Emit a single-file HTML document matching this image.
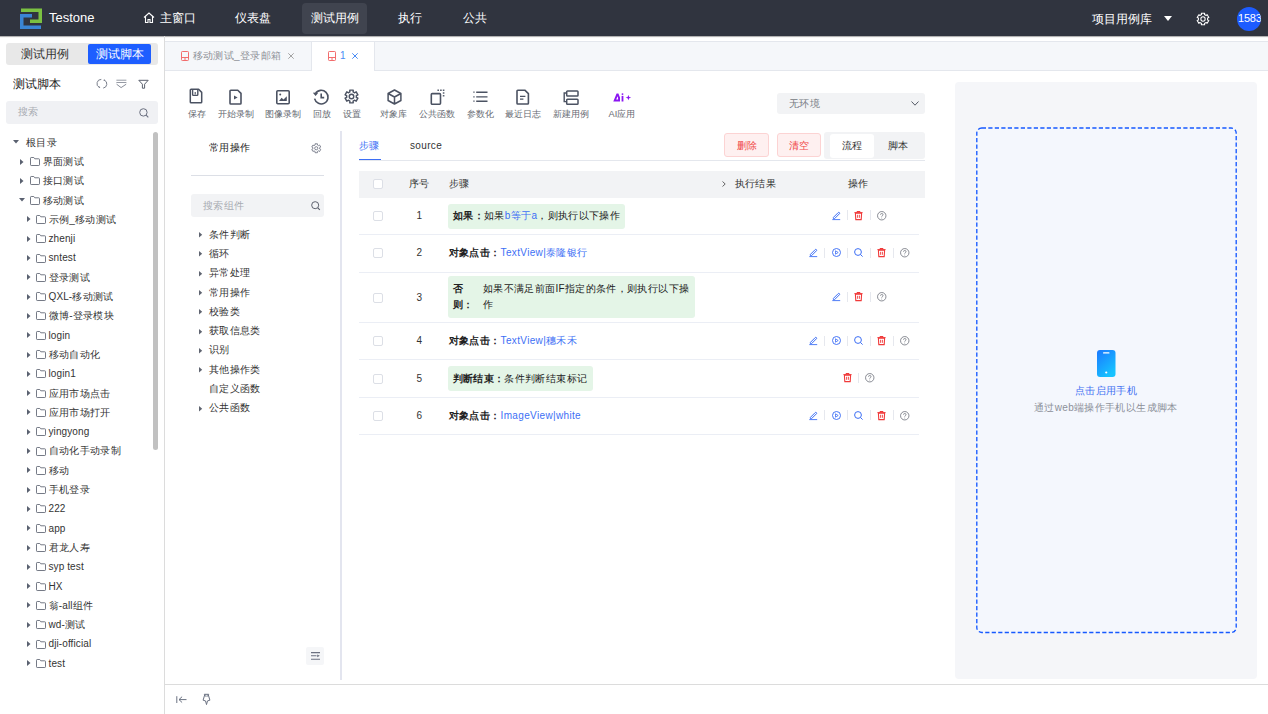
<!DOCTYPE html>
<html><head><meta charset="utf-8">
<style>
*{margin:0;padding:0;box-sizing:border-box}
html,body{width:1268px;height:714px;overflow:hidden;background:#fff;font-family:"Liberation Sans",sans-serif;position:relative}
.a{position:absolute}
.t{position:absolute;white-space:nowrap;line-height:20px;height:20px}
.tr{font-size:10px;letter-spacing:0.35px;color:#333}
.lat{font-size:10px;letter-spacing:0.1px}
.tl{font-size:9.2px;color:#666a72}
.cb{left:373px;width:10px;height:10px;border:1px solid #dcdfe6;border-radius:2px;background:#fff}
svg{position:absolute;overflow:visible}
</style></head><body>

<!-- HEADER -->
<div class="a" style="left:0;top:0;width:1268px;height:36px;background:#30343f;box-shadow:0 1px 0.8px rgba(0,0,0,0.3)"></div>
<svg style="left:20px;top:8px" width="22" height="21" viewBox="0 0 22 21">
  <path d="M1 0.5H22V15H10V11.5H18.5V4H1Z" fill="#7bc142"/>
  <path d="M0 6H12V9.5H3.5V17.5H21V21H0Z" fill="#3a85d5"/>
</svg>
<div class="t" style="left:49px;top:8px;font-size:13px;color:#fff">Testone</div>

<svg style="left:143px;top:12px" width="12" height="11" viewBox="0 0 12 11"><path d="M1 5.5L6 1L11 5.5M2.5 4.5V10.5H5V7.5H7V10.5H9.5V4.5" fill="none" stroke="#fff" stroke-width="1.1"/></svg>
<div class="t" style="left:159.5px;top:8px;font-size:12.2px;color:#fff">主窗口</div>
<div class="t" style="left:235px;top:8px;font-size:12.2px;color:#fff">仪表盘</div>
<div class="a" style="left:302px;top:3px;width:65px;height:31px;background:#40444f;border-radius:4px"></div>
<div class="t" style="left:310.7px;top:8px;font-size:12.2px;color:#fff">测试用例</div>
<div class="t" style="left:398.4px;top:8px;font-size:12.2px;color:#fff">执行</div>
<div class="t" style="left:462.5px;top:8px;font-size:12.2px;color:#fff">公共</div>

<div class="t" style="left:1092px;top:9px;font-size:12.2px;color:#fff">项目用例库</div>
<svg style="left:1164px;top:16px" width="8" height="5" viewBox="0 0 8 5"><path d="M0 0H8L4 5Z" fill="#fff"/></svg>
<svg style="left:1196px;top:11.5px" width="14" height="14" viewBox="0 0 24 24"><path d="M9.16 2.10 L14.84 2.10 L14.47 4.39 L17.35 6.05 L19.15 4.59 L21.99 9.51 L19.83 10.34 L19.83 13.66 L21.99 14.49 L19.15 19.41 L17.35 17.95 L14.47 19.61 L14.84 21.90 L9.16 21.90 L9.53 19.61 L6.65 17.95 L4.85 19.41 L2.01 14.49 L4.17 13.66 L4.17 10.34 L2.01 9.51 L4.85 4.59 L6.65 6.05 L9.53 4.39Z" fill="none" stroke="#fff" stroke-width="1.8" stroke-linejoin="round"/><circle cx="12" cy="12" r="3.7" fill="none" stroke="#fff" stroke-width="1.8"/></svg>
<div class="a" style="left:1237px;top:6.5px;width:24px;height:24px;border-radius:50%;background:#1d5cff;overflow:hidden">
  <div class="t" style="left:1px;top:1px;font-size:11px;color:#fff;letter-spacing:-0.2px">1583</div>
</div>

<!-- SIDEBAR -->
<div class="a" style="left:164px;top:36px;width:1px;height:678px;background:#dcdcdc"></div>
<div class="a" style="left:6px;top:43px;width:152px;height:22px;background:#e8e8e8;border-radius:3px"></div>
<div class="a" style="left:88px;top:44px;width:63px;height:20px;background:#1e5eff;border-radius:2px"></div>
<div class="t" style="left:21px;top:44px;font-size:12.2px;color:#333">测试用例</div>
<div class="t" style="left:96px;top:44px;font-size:12.2px;color:#fff">测试脚本</div>
<div class="t" style="left:13px;top:74px;font-size:12.4px;color:#222">测试脚本</div>

<!-- sidebar icons -->
<svg style="left:97px;top:78px" width="11" height="11" viewBox="0 0 11 11"><path d="M4.3 1.4A4.2 4.2 0 0 0 2.2 9.3" fill="none" stroke="#7a7f8c" stroke-width="1"/><path d="M7.3 2.1A4.2 4.2 0 0 1 6.2 10.1" fill="none" stroke="#7a7f8c" stroke-width="1"/><circle cx="2.4" cy="9.3" r="0.8" fill="#7a7f8c"/><circle cx="7.3" cy="2.2" r="0.8" fill="#7a7f8c"/></svg>
<svg style="left:115.5px;top:78px" width="11" height="11" viewBox="0 0 11 11"><path d="M0.4 2.2H10.4M0.4 4.5H10.4" stroke="#8a8f9a" stroke-width="0.9"/><path d="M0.6 6.2L5.1 9.6L10.2 6.2" fill="none" stroke="#7a7f8c" stroke-width="0.9"/></svg>
<svg style="left:138px;top:78px" width="11" height="11" viewBox="0 0 11 11"><path d="M0.8 2.3H10.2L6.6 6.2V10.2H4.4V6.2Z" fill="none" stroke="#5a606d" stroke-width="1" stroke-linejoin="round"/></svg>
<!-- search -->
<div class="a" style="left:6px;top:100.5px;width:152px;height:23.5px;background:#f0f1f4;border-radius:3px"></div>
<div class="t" style="left:18px;top:102px;font-size:10px;letter-spacing:0.35px;color:#a8abb2">搜索</div>
<svg style="left:139px;top:107.5px" width="10" height="10" viewBox="0 0 10 10"><circle cx="4.4" cy="4.4" r="3.7" fill="none" stroke="#6b7080" stroke-width="1"/><path d="M7.2 7.2L9.3 9.3" stroke="#6b7080" stroke-width="1.1"/></svg>
<!-- scrollbar -->
<div class="a" style="left:153px;top:132px;width:5px;height:318px;background:#c1c1c1;border-radius:3px"></div>
<svg style="left:13px;top:140.2px" width="6" height="4" viewBox="0 0 6 4"><path d="M0 0H6L3 3.5Z" fill="#5a6170"/></svg>
<div class="t tr" style="left:26px;top:132.6px">根目录</div>
<svg style="left:20px;top:158.5px" width="4" height="6" viewBox="0 0 4 6"><path d="M0 0V6L3.5 3Z" fill="#5a6170"/></svg>
<svg style="left:30px;top:157.0px" width="10" height="9" viewBox="0 0 10 9"><path d="M0.5 1.2Q0.5 0.5 1.2 0.5H3.8L4.8 1.8H8.8Q9.5 1.8 9.5 2.5V7.8Q9.5 8.5 8.8 8.5H1.2Q0.5 8.5 0.5 7.8Z" fill="none" stroke="#656b78" stroke-width="0.9"/></svg>
<div class="t tr" style="left:42.5px;top:151.9px">界面测试</div>
<svg style="left:20px;top:177.8px" width="4" height="6" viewBox="0 0 4 6"><path d="M0 0V6L3.5 3Z" fill="#5a6170"/></svg>
<svg style="left:30px;top:176.3px" width="10" height="9" viewBox="0 0 10 9"><path d="M0.5 1.2Q0.5 0.5 1.2 0.5H3.8L4.8 1.8H8.8Q9.5 1.8 9.5 2.5V7.8Q9.5 8.5 8.8 8.5H1.2Q0.5 8.5 0.5 7.8Z" fill="none" stroke="#656b78" stroke-width="0.9"/></svg>
<div class="t tr" style="left:42.5px;top:171.2px">接口测试</div>
<svg style="left:18.5px;top:198.1px" width="6" height="4" viewBox="0 0 6 4"><path d="M0 0H6L3 3.5Z" fill="#5a6170"/></svg>
<svg style="left:30px;top:195.6px" width="10" height="9" viewBox="0 0 10 9"><path d="M0.5 1.2Q0.5 0.5 1.2 0.5H3.8L4.8 1.8H8.8Q9.5 1.8 9.5 2.5V7.8Q9.5 8.5 8.8 8.5H1.2Q0.5 8.5 0.5 7.8Z" fill="none" stroke="#656b78" stroke-width="0.9"/></svg>
<div class="t tr" style="left:42.5px;top:190.5px">移动测试</div>
<svg style="left:26.5px;top:216.4px" width="4" height="6" viewBox="0 0 4 6"><path d="M0 0V6L3.5 3Z" fill="#5a6170"/></svg>
<svg style="left:36px;top:214.9px" width="10" height="9" viewBox="0 0 10 9"><path d="M0.5 1.2Q0.5 0.5 1.2 0.5H3.8L4.8 1.8H8.8Q9.5 1.8 9.5 2.5V7.8Q9.5 8.5 8.8 8.5H1.2Q0.5 8.5 0.5 7.8Z" fill="none" stroke="#656b78" stroke-width="0.9"/></svg>
<div class="t tr" style="left:48.5px;top:209.8px">示例<span class="lat">_</span>移动测试</div>
<svg style="left:26.5px;top:235.7px" width="4" height="6" viewBox="0 0 4 6"><path d="M0 0V6L3.5 3Z" fill="#5a6170"/></svg>
<svg style="left:36px;top:234.2px" width="10" height="9" viewBox="0 0 10 9"><path d="M0.5 1.2Q0.5 0.5 1.2 0.5H3.8L4.8 1.8H8.8Q9.5 1.8 9.5 2.5V7.8Q9.5 8.5 8.8 8.5H1.2Q0.5 8.5 0.5 7.8Z" fill="none" stroke="#656b78" stroke-width="0.9"/></svg>
<div class="t tr" style="left:48.5px;top:229.1px"><span class="lat">zhenji</span></div>
<svg style="left:26.5px;top:255.0px" width="4" height="6" viewBox="0 0 4 6"><path d="M0 0V6L3.5 3Z" fill="#5a6170"/></svg>
<svg style="left:36px;top:253.5px" width="10" height="9" viewBox="0 0 10 9"><path d="M0.5 1.2Q0.5 0.5 1.2 0.5H3.8L4.8 1.8H8.8Q9.5 1.8 9.5 2.5V7.8Q9.5 8.5 8.8 8.5H1.2Q0.5 8.5 0.5 7.8Z" fill="none" stroke="#656b78" stroke-width="0.9"/></svg>
<div class="t tr" style="left:48.5px;top:248.4px"><span class="lat">sntest</span></div>
<svg style="left:26.5px;top:274.3px" width="4" height="6" viewBox="0 0 4 6"><path d="M0 0V6L3.5 3Z" fill="#5a6170"/></svg>
<svg style="left:36px;top:272.8px" width="10" height="9" viewBox="0 0 10 9"><path d="M0.5 1.2Q0.5 0.5 1.2 0.5H3.8L4.8 1.8H8.8Q9.5 1.8 9.5 2.5V7.8Q9.5 8.5 8.8 8.5H1.2Q0.5 8.5 0.5 7.8Z" fill="none" stroke="#656b78" stroke-width="0.9"/></svg>
<div class="t tr" style="left:48.5px;top:267.7px">登录测试</div>
<svg style="left:26.5px;top:293.6px" width="4" height="6" viewBox="0 0 4 6"><path d="M0 0V6L3.5 3Z" fill="#5a6170"/></svg>
<svg style="left:36px;top:292.1px" width="10" height="9" viewBox="0 0 10 9"><path d="M0.5 1.2Q0.5 0.5 1.2 0.5H3.8L4.8 1.8H8.8Q9.5 1.8 9.5 2.5V7.8Q9.5 8.5 8.8 8.5H1.2Q0.5 8.5 0.5 7.8Z" fill="none" stroke="#656b78" stroke-width="0.9"/></svg>
<div class="t tr" style="left:48.5px;top:287.0px"><span class="lat">QXL-</span>移动测试</div>
<svg style="left:26.5px;top:312.9px" width="4" height="6" viewBox="0 0 4 6"><path d="M0 0V6L3.5 3Z" fill="#5a6170"/></svg>
<svg style="left:36px;top:311.4px" width="10" height="9" viewBox="0 0 10 9"><path d="M0.5 1.2Q0.5 0.5 1.2 0.5H3.8L4.8 1.8H8.8Q9.5 1.8 9.5 2.5V7.8Q9.5 8.5 8.8 8.5H1.2Q0.5 8.5 0.5 7.8Z" fill="none" stroke="#656b78" stroke-width="0.9"/></svg>
<div class="t tr" style="left:48.5px;top:306.3px">微博<span class="lat">-</span>登录模块</div>
<svg style="left:26.5px;top:332.2px" width="4" height="6" viewBox="0 0 4 6"><path d="M0 0V6L3.5 3Z" fill="#5a6170"/></svg>
<svg style="left:36px;top:330.7px" width="10" height="9" viewBox="0 0 10 9"><path d="M0.5 1.2Q0.5 0.5 1.2 0.5H3.8L4.8 1.8H8.8Q9.5 1.8 9.5 2.5V7.8Q9.5 8.5 8.8 8.5H1.2Q0.5 8.5 0.5 7.8Z" fill="none" stroke="#656b78" stroke-width="0.9"/></svg>
<div class="t tr" style="left:48.5px;top:325.6px"><span class="lat">login</span></div>
<svg style="left:26.5px;top:351.5px" width="4" height="6" viewBox="0 0 4 6"><path d="M0 0V6L3.5 3Z" fill="#5a6170"/></svg>
<svg style="left:36px;top:350.0px" width="10" height="9" viewBox="0 0 10 9"><path d="M0.5 1.2Q0.5 0.5 1.2 0.5H3.8L4.8 1.8H8.8Q9.5 1.8 9.5 2.5V7.8Q9.5 8.5 8.8 8.5H1.2Q0.5 8.5 0.5 7.8Z" fill="none" stroke="#656b78" stroke-width="0.9"/></svg>
<div class="t tr" style="left:48.5px;top:344.9px">移动自动化</div>
<svg style="left:26.5px;top:370.8px" width="4" height="6" viewBox="0 0 4 6"><path d="M0 0V6L3.5 3Z" fill="#5a6170"/></svg>
<svg style="left:36px;top:369.3px" width="10" height="9" viewBox="0 0 10 9"><path d="M0.5 1.2Q0.5 0.5 1.2 0.5H3.8L4.8 1.8H8.8Q9.5 1.8 9.5 2.5V7.8Q9.5 8.5 8.8 8.5H1.2Q0.5 8.5 0.5 7.8Z" fill="none" stroke="#656b78" stroke-width="0.9"/></svg>
<div class="t tr" style="left:48.5px;top:364.2px"><span class="lat">login1</span></div>
<svg style="left:26.5px;top:390.1px" width="4" height="6" viewBox="0 0 4 6"><path d="M0 0V6L3.5 3Z" fill="#5a6170"/></svg>
<svg style="left:36px;top:388.6px" width="10" height="9" viewBox="0 0 10 9"><path d="M0.5 1.2Q0.5 0.5 1.2 0.5H3.8L4.8 1.8H8.8Q9.5 1.8 9.5 2.5V7.8Q9.5 8.5 8.8 8.5H1.2Q0.5 8.5 0.5 7.8Z" fill="none" stroke="#656b78" stroke-width="0.9"/></svg>
<div class="t tr" style="left:48.5px;top:383.5px">应用市场点击</div>
<svg style="left:26.5px;top:409.4px" width="4" height="6" viewBox="0 0 4 6"><path d="M0 0V6L3.5 3Z" fill="#5a6170"/></svg>
<svg style="left:36px;top:407.9px" width="10" height="9" viewBox="0 0 10 9"><path d="M0.5 1.2Q0.5 0.5 1.2 0.5H3.8L4.8 1.8H8.8Q9.5 1.8 9.5 2.5V7.8Q9.5 8.5 8.8 8.5H1.2Q0.5 8.5 0.5 7.8Z" fill="none" stroke="#656b78" stroke-width="0.9"/></svg>
<div class="t tr" style="left:48.5px;top:402.8px">应用市场打开</div>
<svg style="left:26.5px;top:428.7px" width="4" height="6" viewBox="0 0 4 6"><path d="M0 0V6L3.5 3Z" fill="#5a6170"/></svg>
<svg style="left:36px;top:427.2px" width="10" height="9" viewBox="0 0 10 9"><path d="M0.5 1.2Q0.5 0.5 1.2 0.5H3.8L4.8 1.8H8.8Q9.5 1.8 9.5 2.5V7.8Q9.5 8.5 8.8 8.5H1.2Q0.5 8.5 0.5 7.8Z" fill="none" stroke="#656b78" stroke-width="0.9"/></svg>
<div class="t tr" style="left:48.5px;top:422.1px"><span class="lat">yingyong</span></div>
<svg style="left:26.5px;top:448.0px" width="4" height="6" viewBox="0 0 4 6"><path d="M0 0V6L3.5 3Z" fill="#5a6170"/></svg>
<svg style="left:36px;top:446.5px" width="10" height="9" viewBox="0 0 10 9"><path d="M0.5 1.2Q0.5 0.5 1.2 0.5H3.8L4.8 1.8H8.8Q9.5 1.8 9.5 2.5V7.8Q9.5 8.5 8.8 8.5H1.2Q0.5 8.5 0.5 7.8Z" fill="none" stroke="#656b78" stroke-width="0.9"/></svg>
<div class="t tr" style="left:48.5px;top:441.4px">自动化手动录制</div>
<svg style="left:26.5px;top:467.3px" width="4" height="6" viewBox="0 0 4 6"><path d="M0 0V6L3.5 3Z" fill="#5a6170"/></svg>
<svg style="left:36px;top:465.8px" width="10" height="9" viewBox="0 0 10 9"><path d="M0.5 1.2Q0.5 0.5 1.2 0.5H3.8L4.8 1.8H8.8Q9.5 1.8 9.5 2.5V7.8Q9.5 8.5 8.8 8.5H1.2Q0.5 8.5 0.5 7.8Z" fill="none" stroke="#656b78" stroke-width="0.9"/></svg>
<div class="t tr" style="left:48.5px;top:460.7px">移动</div>
<svg style="left:26.5px;top:486.6px" width="4" height="6" viewBox="0 0 4 6"><path d="M0 0V6L3.5 3Z" fill="#5a6170"/></svg>
<svg style="left:36px;top:485.1px" width="10" height="9" viewBox="0 0 10 9"><path d="M0.5 1.2Q0.5 0.5 1.2 0.5H3.8L4.8 1.8H8.8Q9.5 1.8 9.5 2.5V7.8Q9.5 8.5 8.8 8.5H1.2Q0.5 8.5 0.5 7.8Z" fill="none" stroke="#656b78" stroke-width="0.9"/></svg>
<div class="t tr" style="left:48.5px;top:480.0px">手机登录</div>
<svg style="left:26.5px;top:505.9px" width="4" height="6" viewBox="0 0 4 6"><path d="M0 0V6L3.5 3Z" fill="#5a6170"/></svg>
<svg style="left:36px;top:504.4px" width="10" height="9" viewBox="0 0 10 9"><path d="M0.5 1.2Q0.5 0.5 1.2 0.5H3.8L4.8 1.8H8.8Q9.5 1.8 9.5 2.5V7.8Q9.5 8.5 8.8 8.5H1.2Q0.5 8.5 0.5 7.8Z" fill="none" stroke="#656b78" stroke-width="0.9"/></svg>
<div class="t tr" style="left:48.5px;top:499.3px"><span class="lat">222</span></div>
<svg style="left:26.5px;top:525.2px" width="4" height="6" viewBox="0 0 4 6"><path d="M0 0V6L3.5 3Z" fill="#5a6170"/></svg>
<svg style="left:36px;top:523.7px" width="10" height="9" viewBox="0 0 10 9"><path d="M0.5 1.2Q0.5 0.5 1.2 0.5H3.8L4.8 1.8H8.8Q9.5 1.8 9.5 2.5V7.8Q9.5 8.5 8.8 8.5H1.2Q0.5 8.5 0.5 7.8Z" fill="none" stroke="#656b78" stroke-width="0.9"/></svg>
<div class="t tr" style="left:48.5px;top:518.6px"><span class="lat">app</span></div>
<svg style="left:26.5px;top:544.5px" width="4" height="6" viewBox="0 0 4 6"><path d="M0 0V6L3.5 3Z" fill="#5a6170"/></svg>
<svg style="left:36px;top:543.0px" width="10" height="9" viewBox="0 0 10 9"><path d="M0.5 1.2Q0.5 0.5 1.2 0.5H3.8L4.8 1.8H8.8Q9.5 1.8 9.5 2.5V7.8Q9.5 8.5 8.8 8.5H1.2Q0.5 8.5 0.5 7.8Z" fill="none" stroke="#656b78" stroke-width="0.9"/></svg>
<div class="t tr" style="left:48.5px;top:537.9px">君龙人寿</div>
<svg style="left:26.5px;top:563.8px" width="4" height="6" viewBox="0 0 4 6"><path d="M0 0V6L3.5 3Z" fill="#5a6170"/></svg>
<svg style="left:36px;top:562.3px" width="10" height="9" viewBox="0 0 10 9"><path d="M0.5 1.2Q0.5 0.5 1.2 0.5H3.8L4.8 1.8H8.8Q9.5 1.8 9.5 2.5V7.8Q9.5 8.5 8.8 8.5H1.2Q0.5 8.5 0.5 7.8Z" fill="none" stroke="#656b78" stroke-width="0.9"/></svg>
<div class="t tr" style="left:48.5px;top:557.2px"><span class="lat">syp test</span></div>
<svg style="left:26.5px;top:583.1px" width="4" height="6" viewBox="0 0 4 6"><path d="M0 0V6L3.5 3Z" fill="#5a6170"/></svg>
<svg style="left:36px;top:581.6px" width="10" height="9" viewBox="0 0 10 9"><path d="M0.5 1.2Q0.5 0.5 1.2 0.5H3.8L4.8 1.8H8.8Q9.5 1.8 9.5 2.5V7.8Q9.5 8.5 8.8 8.5H1.2Q0.5 8.5 0.5 7.8Z" fill="none" stroke="#656b78" stroke-width="0.9"/></svg>
<div class="t tr" style="left:48.5px;top:576.5px"><span class="lat">HX</span></div>
<svg style="left:26.5px;top:602.4px" width="4" height="6" viewBox="0 0 4 6"><path d="M0 0V6L3.5 3Z" fill="#5a6170"/></svg>
<svg style="left:36px;top:600.9px" width="10" height="9" viewBox="0 0 10 9"><path d="M0.5 1.2Q0.5 0.5 1.2 0.5H3.8L4.8 1.8H8.8Q9.5 1.8 9.5 2.5V7.8Q9.5 8.5 8.8 8.5H1.2Q0.5 8.5 0.5 7.8Z" fill="none" stroke="#656b78" stroke-width="0.9"/></svg>
<div class="t tr" style="left:48.5px;top:595.8px">翁<span class="lat">-all</span>组件</div>
<svg style="left:26.5px;top:621.7px" width="4" height="6" viewBox="0 0 4 6"><path d="M0 0V6L3.5 3Z" fill="#5a6170"/></svg>
<svg style="left:36px;top:620.2px" width="10" height="9" viewBox="0 0 10 9"><path d="M0.5 1.2Q0.5 0.5 1.2 0.5H3.8L4.8 1.8H8.8Q9.5 1.8 9.5 2.5V7.8Q9.5 8.5 8.8 8.5H1.2Q0.5 8.5 0.5 7.8Z" fill="none" stroke="#656b78" stroke-width="0.9"/></svg>
<div class="t tr" style="left:48.5px;top:615.1px"><span class="lat">wd-</span>测试</div>
<svg style="left:26.5px;top:641.0px" width="4" height="6" viewBox="0 0 4 6"><path d="M0 0V6L3.5 3Z" fill="#5a6170"/></svg>
<svg style="left:36px;top:639.5px" width="10" height="9" viewBox="0 0 10 9"><path d="M0.5 1.2Q0.5 0.5 1.2 0.5H3.8L4.8 1.8H8.8Q9.5 1.8 9.5 2.5V7.8Q9.5 8.5 8.8 8.5H1.2Q0.5 8.5 0.5 7.8Z" fill="none" stroke="#656b78" stroke-width="0.9"/></svg>
<div class="t tr" style="left:48.5px;top:634.4px"><span class="lat">dji-official</span></div>
<svg style="left:26.5px;top:660.3px" width="4" height="6" viewBox="0 0 4 6"><path d="M0 0V6L3.5 3Z" fill="#5a6170"/></svg>
<svg style="left:36px;top:658.8px" width="10" height="9" viewBox="0 0 10 9"><path d="M0.5 1.2Q0.5 0.5 1.2 0.5H3.8L4.8 1.8H8.8Q9.5 1.8 9.5 2.5V7.8Q9.5 8.5 8.8 8.5H1.2Q0.5 8.5 0.5 7.8Z" fill="none" stroke="#656b78" stroke-width="0.9"/></svg>
<div class="t tr" style="left:48.5px;top:653.7px"><span class="lat">test</span></div><!-- TABS -->
<div class="a" style="left:165px;top:41px;width:1103px;height:30px;background:#f5f7fa;border-top:1px solid #e4e7ed;border-bottom:1px solid #e4e7ed"></div>
<div class="a" style="left:311px;top:41px;width:64px;height:30px;background:#fff;border-left:1px solid #e4e7ed;border-right:1px solid #e4e7ed;border-top:1px solid #e4e7ed"></div>
<svg style="left:181px;top:51px" width="8" height="10" viewBox="0 0 8 10"><rect x="0.5" y="0.5" width="7" height="9" rx="0.8" fill="none" stroke="#f26d6d" stroke-width="1"/><path d="M0.5 6.5H7.5M4 6.5V9.5" stroke="#f26d6d" stroke-width="1"/></svg>
<div class="t" style="left:192.5px;top:46px;font-size:10px;letter-spacing:0.35px;color:#8d9097">移动测试_登录邮箱</div>
<svg style="left:288px;top:53px" width="6" height="6" viewBox="0 0 6 6"><path d="M0.3 0.3L5.7 5.7M5.7 0.3L0.3 5.7" stroke="#999" stroke-width="0.9"/></svg>
<svg style="left:327.5px;top:51px" width="8" height="10" viewBox="0 0 8 10"><rect x="0.5" y="0.5" width="7" height="9" rx="0.8" fill="none" stroke="#f26d6d" stroke-width="1"/><path d="M0.5 6.5H7.5M4 6.5V9.5" stroke="#f26d6d" stroke-width="1"/></svg>
<div class="t" style="left:340px;top:46px;font-size:10px;letter-spacing:0.35px;color:#4a8cf5">1</div>
<svg style="left:352px;top:53px" width="6" height="6" viewBox="0 0 6 6"><path d="M0.3 0.3L5.7 5.7M5.7 0.3L0.3 5.7" stroke="#4a8cf5" stroke-width="1"/></svg>
<!-- TOOLBAR -->
<svg style="left:188.8px;top:88.3px" width="14" height="16" viewBox="0 0 14 16"><path d="M2.1 1.3H9.6L12.7 4.4V13.9Q12.7 14.7 11.9 14.7H2.1Q1.3 14.7 1.3 13.9V2.1Q1.3 1.3 2.1 1.3Z" fill="none" stroke="#4b5262" stroke-width="1.5" stroke-linejoin="round"/><path d="M3.6 1.3V6.6Q3.6 7.4 4.4 7.4H8Q8.8 7.4 8.8 6.6V1.3" fill="none" stroke="#4b5262" stroke-width="1.4"/><path d="M6.2 4V6.6" stroke="#4b5262" stroke-width="1.1"/></svg>
<svg style="left:229px;top:88.5px" width="13" height="16" viewBox="0 0 13 16"><path d="M1.8 1.2H8.8L12 4.4V14.2Q12 15 11.2 15H1.8Q1 15 1 14.2V2Q1 1.2 1.8 1.2Z" fill="none" stroke="#4b5262" stroke-width="1.6" stroke-linejoin="round"/><path d="M5 6.6V10.6L8.6 8.6Z" fill="#4b5262"/></svg>
<svg style="left:276px;top:89.5px" width="14" height="14.5" viewBox="0 0 14 14.5"><rect x="0.8" y="0.8" width="12.4" height="12.9" rx="1" fill="none" stroke="#4b5262" stroke-width="1.6"/><circle cx="4.2" cy="4.4" r="1" fill="#4b5262"/><path d="M3 11L5.6 7.8L7.5 9.4L10.8 6.2V11Z" fill="#4b5262"/></svg>
<svg style="left:313px;top:89px" width="16" height="15.5" viewBox="0 0 16 15.5"><path d="M2.3 4.8A6.8 6.8 0 1 1 1.6 9.6" fill="none" stroke="#4b5262" stroke-width="1.6"/><path d="M0.6 3.6L2.6 5.9L4.4 3.8" fill="none" stroke="#4b5262" stroke-width="1.4"/><path d="M8.2 4.6V8.6H11.2" fill="none" stroke="#4b5262" stroke-width="1.6"/></svg>
<svg style="left:343.5px;top:89px" width="15" height="15" viewBox="0 0 24 24"><path d="M9.26 1.76 L14.74 1.76 L14.57 4.53 L17.18 6.04 L19.50 4.50 L22.24 9.26 L19.75 10.49 L19.75 13.51 L22.24 14.74 L19.50 19.50 L17.18 17.96 L14.57 19.47 L14.74 22.24 L9.26 22.24 L9.43 19.47 L6.82 17.96 L4.50 19.50 L1.76 14.74 L4.25 13.51 L4.25 10.49 L1.76 9.26 L4.50 4.50 L6.82 6.04 L9.43 4.53Z" fill="none" stroke="#4b5262" stroke-width="2.3" stroke-linejoin="round"/><circle cx="12" cy="12" r="3.6" fill="none" stroke="#4b5262" stroke-width="2.3"/></svg>
<svg style="left:386.5px;top:88.5px" width="15" height="16" viewBox="0 0 15 16"><path d="M7.5 1L13.9 4.5V11.5L7.5 15L1.1 11.5V4.5Z M1.1 4.5L7.5 8L13.9 4.5 M7.5 8V15" fill="none" stroke="#4b5262" stroke-width="1.5" stroke-linejoin="round"/></svg>
<svg style="left:429.5px;top:88.5px" width="15" height="16" viewBox="0 0 15 16"><rect x="1.3" y="4.6" width="9.2" height="10.6" rx="0.9" fill="none" stroke="#4b5262" stroke-width="1.6"/><path d="M7.4 0.5h1.6v1.6H7.4zM10.1 0.5h1.6v1.6h-1.6zM12.8 0.5h1.6v1.6h-1.6zM12.8 3.2h1.6v1.6h-1.6zM12.8 5.9h1.6v1.6h-1.6z" fill="#5a6170"/></svg>
<svg style="left:472.5px;top:91px" width="15" height="11" viewBox="0 0 15 11"><path d="M0.3 0.5h1.3v1.3H0.3zM0.3 5.2h1.3v1.3H0.3zM0.3 9.5h1.3v1.3H0.3z" fill="#4b5262"/><path d="M3.2 1.2H14.5M3.2 5.9H14.5M3.2 10.2H14.5" stroke="#4b5262" stroke-width="1.4"/></svg>
<svg style="left:516px;top:88.5px" width="13.5" height="16" viewBox="0 0 13.5 16"><path d="M1.8 1.2H8.8L12.4 4.6V14.2Q12.4 15 11.6 15H1.8Q1 15 1 14.2V2Q1 1.2 1.8 1.2Z" fill="none" stroke="#4b5262" stroke-width="1.6" stroke-linejoin="round"/><path d="M4 7.3H9.4M4 10.2H7.4" stroke="#4b5262" stroke-width="1.3"/></svg>
<svg style="left:562.5px;top:89.5px" width="16" height="15" viewBox="0 0 16 15"><rect x="3.7" y="1" width="11.3" height="5" rx="0.8" fill="none" stroke="#4b5262" stroke-width="1.5"/><rect x="3.7" y="9.2" width="11.3" height="5" rx="0.8" fill="none" stroke="#4b5262" stroke-width="1.5"/><path d="M3.7 3H1.2V11.6H3.7" fill="none" stroke="#4b5262" stroke-width="1.4"/></svg>
<svg style="left:612.5px;top:92.5px" width="19" height="9" viewBox="0 0 19 9"><path d="M0.3 8.5L3.6 0.4H5.4L7 4.5V8.5H2.4Z M3.2 6.6H5.1V4.9L4.5 3.2Z" fill="#8b16f2" fill-rule="evenodd"/><rect x="8.6" y="2.9" width="1.8" height="5.6" fill="#8b16f2"/><circle cx="9.5" cy="1.1" r="0.95" fill="#8b16f2"/><path d="M15.4 1.9L16.2 3.9L18.2 4.6L16.2 5.3L15.4 7.3L14.6 5.3L12.6 4.6L14.6 3.9Z" fill="#8b16f2"/></svg>
<div class="t tl" style="left:188px;top:103.8px">保存</div>
<div class="t tl" style="left:217.5px;top:103.8px">开始录制</div>
<div class="t tl" style="left:265px;top:103.8px">图像录制</div>
<div class="t tl" style="left:312.5px;top:103.8px">回放</div>
<div class="t tl" style="left:342.5px;top:103.8px">设置</div>
<div class="t tl" style="left:380px;top:103.8px">对象库</div>
<div class="t tl" style="left:419px;top:103.8px">公共函数</div>
<div class="t tl" style="left:467px;top:103.8px">参数化</div>
<div class="t tl" style="left:504.5px;top:103.8px">最近日志</div>
<div class="t tl" style="left:552.5px;top:103.8px">新建用例</div>
<div class="t tl" style="left:608.5px;top:103.8px">AI应用</div>
<!-- ENV DROPDOWN -->
<div class="a" style="left:777px;top:93px;width:148px;height:20.5px;background:#f2f3f5;border-radius:3px"></div>
<div class="t" style="left:789px;top:93.5px;font-size:10px;letter-spacing:0.35px;color:#757982">无环境</div>
<svg style="left:910.5px;top:101px" width="8" height="5" viewBox="0 0 8 5"><path d="M0.5 0.5L4 4.2L7.5 0.5" fill="none" stroke="#555a66" stroke-width="1"/></svg>

<!-- COMPONENT PANEL -->
<div class="t" style="left:209px;top:138px;font-size:10px;letter-spacing:0.35px;color:#222">常用操作</div>
<svg style="left:310.5px;top:142.5px" width="10.5" height="10.5" viewBox="0 0 24 24"><path d="M9.26 1.76 L14.74 1.76 L14.57 4.53 L17.18 6.04 L19.50 4.50 L22.24 9.26 L19.75 10.49 L19.75 13.51 L22.24 14.74 L19.50 19.50 L17.18 17.96 L14.57 19.47 L14.74 22.24 L9.26 22.24 L9.43 19.47 L6.82 17.96 L4.50 19.50 L1.76 14.74 L4.25 13.51 L4.25 10.49 L1.76 9.26 L4.50 4.50 L6.82 6.04 L9.43 4.53Z" fill="none" stroke="#6b7080" stroke-width="1.9" stroke-linejoin="round"/><circle cx="12" cy="12" r="3.6" fill="none" stroke="#6b7080" stroke-width="1.9"/></svg>
<div class="a" style="left:191px;top:175px;width:133px;height:1px;background:#dcdfe6"></div>
<div class="a" style="left:191px;top:194px;width:133px;height:23px;background:#f2f3f5;border-radius:3px"></div>
<div class="t" style="left:203px;top:195.5px;font-size:10px;letter-spacing:0.35px;color:#a8abb2">搜索组件</div>
<svg style="left:311px;top:201px" width="9.5" height="9.5" viewBox="0 0 10 10"><circle cx="4.4" cy="4.4" r="3.7" fill="none" stroke="#555a66" stroke-width="1"/><path d="M7.2 7.2L9.3 9.3" stroke="#555a66" stroke-width="1.1"/></svg>
<svg style="left:199px;top:232.0px" width="4" height="6" viewBox="0 0 4 6"><path d="M0 0V5.4L3.2 2.7Z" fill="#5f6470"/></svg>
<div class="t" style="left:209px;top:224.6px;font-size:10px;letter-spacing:0.35px;color:#333">条件判断</div>
<svg style="left:199px;top:251.3px" width="4" height="6" viewBox="0 0 4 6"><path d="M0 0V5.4L3.2 2.7Z" fill="#5f6470"/></svg>
<div class="t" style="left:209px;top:243.9px;font-size:10px;letter-spacing:0.35px;color:#333">循环</div>
<svg style="left:199px;top:270.6px" width="4" height="6" viewBox="0 0 4 6"><path d="M0 0V5.4L3.2 2.7Z" fill="#5f6470"/></svg>
<div class="t" style="left:209px;top:263.2px;font-size:10px;letter-spacing:0.35px;color:#333">异常处理</div>
<svg style="left:199px;top:289.9px" width="4" height="6" viewBox="0 0 4 6"><path d="M0 0V5.4L3.2 2.7Z" fill="#5f6470"/></svg>
<div class="t" style="left:209px;top:282.5px;font-size:10px;letter-spacing:0.35px;color:#333">常用操作</div>
<svg style="left:199px;top:309.2px" width="4" height="6" viewBox="0 0 4 6"><path d="M0 0V5.4L3.2 2.7Z" fill="#5f6470"/></svg>
<div class="t" style="left:209px;top:301.8px;font-size:10px;letter-spacing:0.35px;color:#333">校验类</div>
<svg style="left:199px;top:328.5px" width="4" height="6" viewBox="0 0 4 6"><path d="M0 0V5.4L3.2 2.7Z" fill="#5f6470"/></svg>
<div class="t" style="left:209px;top:321.1px;font-size:10px;letter-spacing:0.35px;color:#333">获取信息类</div>
<svg style="left:199px;top:347.8px" width="4" height="6" viewBox="0 0 4 6"><path d="M0 0V5.4L3.2 2.7Z" fill="#5f6470"/></svg>
<div class="t" style="left:209px;top:340.4px;font-size:10px;letter-spacing:0.35px;color:#333">识别</div>
<svg style="left:199px;top:367.1px" width="4" height="6" viewBox="0 0 4 6"><path d="M0 0V5.4L3.2 2.7Z" fill="#5f6470"/></svg>
<div class="t" style="left:209px;top:359.7px;font-size:10px;letter-spacing:0.35px;color:#333">其他操作类</div>
<div class="t" style="left:209px;top:379.0px;font-size:10px;letter-spacing:0.35px;color:#333">自定义函数</div>
<svg style="left:199px;top:405.7px" width="4" height="6" viewBox="0 0 4 6"><path d="M0 0V5.4L3.2 2.7Z" fill="#5f6470"/></svg>
<div class="t" style="left:209px;top:398.3px;font-size:10px;letter-spacing:0.35px;color:#333">公共函数</div>
<div class="a" style="left:306px;top:647px;width:18px;height:18px;background:#f5f6f8;border-radius:2px"></div>
<svg style="left:311px;top:652px" width="9" height="8" viewBox="0 0 9 8"><path d="M0 0.6H9M0 3.8H5.5M0 7.2H9" stroke="#6b7080" stroke-width="1.1"/><path d="M6.2 2.4L8.8 3.8L6.2 5.2Z" fill="#6b7080"/></svg>
<div class="a" style="left:340px;top:131px;width:1.6px;height:549px;background:#e3e5ef"></div>

<!-- STEP TABS -->
<div class="t" style="left:359px;top:136px;font-size:10px;letter-spacing:0.35px;color:#3d6ff5">步骤</div>
<div class="a" style="left:359px;top:159px;width:21.5px;height:2px;background:#3d6ff5"></div>
<div class="t" style="left:410px;top:135.5px;font-size:10px;letter-spacing:0.35px;color:#333">source</div>
<div class="a" style="left:359px;top:160px;width:566px;height:1px;background:#e4e7ed"></div>
<div class="a" style="left:724px;top:133px;width:45px;height:24px;background:#fef0f0;border:1px solid #fcd3d3;border-radius:3px"></div>
<div class="t" style="left:736.5px;top:135.5px;font-size:10px;letter-spacing:0.35px;color:#f04848">删除</div>
<div class="a" style="left:777px;top:133px;width:44px;height:24px;background:#fef0f0;border:1px solid #fcd3d3;border-radius:3px"></div>
<div class="t" style="left:788.5px;top:135.5px;font-size:10px;letter-spacing:0.35px;color:#f04848">清空</div>
<div class="a" style="left:824px;top:132px;width:101px;height:27px;background:#f2f3f5;border-radius:3px"></div>
<div class="a" style="left:830px;top:133.5px;width:44px;height:24px;background:#fff;border-radius:3px"></div>
<div class="t" style="left:842px;top:135.5px;font-size:10px;letter-spacing:0.35px;color:#333">流程</div>
<div class="t" style="left:887.5px;top:135.5px;font-size:10px;letter-spacing:0.35px;color:#333">脚本</div>

<!-- TABLE -->
<div class="a" style="left:359px;top:171px;width:566px;height:27px;background:#f2f3f5"></div>
<div class="a cb" style="top:178.5px;background:#fff"></div>
<div class="t" style="left:408.5px;top:174px;font-size:10px;letter-spacing:0.35px;color:#333">序号</div>
<div class="t" style="left:449px;top:174px;font-size:10px;letter-spacing:0.35px;color:#333">步骤</div>
<svg style="left:722px;top:180.5px" width="4" height="6" viewBox="0 0 4 6"><path d="M0.5 0.5L3.2 3L0.5 5.5" fill="none" stroke="#555" stroke-width="0.9"/></svg>
<div class="t" style="left:734.5px;top:174px;font-size:10px;letter-spacing:0.35px;color:#333">执行结果</div>
<div class="t" style="left:848px;top:174px;font-size:10px;letter-spacing:0.35px;color:#333">操作</div>
<div class="a cb" style="top:211.2px"></div>
<div class="t" style="left:416.5px;top:206.2px;font-size:10px;letter-spacing:0.35px;color:#333">1</div>
<div class="a" style="left:448.4px;top:203.8px;width:176.6px;height:24.8px;background:#e4f5e7;border-radius:3px"></div>
<div class="t" style="left:453px;top:206.2px;font-size:10px;letter-spacing:0.35px;color:#222"><b>如果：</b>如果<span style="color:#3d6ff5">b等于a</span>，则执行以下操作</div>
<svg style="left:831.6px;top:210.9px" width="9" height="9" viewBox="0 0 9 9"><path d="M1.4 6.4L6.2 1.6Q6.8 1 7.4 1.6Q8 2.2 7.4 2.8L2.6 7.6H1.4Z" fill="none" stroke="#3d6ff5" stroke-width="1" stroke-linejoin="round"/><path d="M0.3 8.6H8.2" stroke="#3d6ff5" stroke-width="0.9"/></svg>
<div class="a" style="left:846.6px;top:210.4px;width:1px;height:10px;background:#e6e8ee"></div>
<svg style="left:854px;top:210.9px" width="9" height="9" viewBox="0 0 9 9"><path d="M0.4 1.6H8.6M3 1.6V0.5H6V1.6" fill="none" stroke="#f03a3a" stroke-width="1"/><path d="M1.4 2.2H7.6L7.2 8.6H1.8Z" fill="none" stroke="#f03a3a" stroke-width="1.1" stroke-linejoin="round"/><path d="M3.6 3.8V6.8M5.4 3.8V6.8" stroke="#f03a3a" stroke-width="0.9"/></svg>
<div class="a" style="left:870px;top:210.4px;width:1px;height:10px;background:#e6e8ee"></div>
<svg style="left:876.8px;top:210.9px" width="9.5" height="9.5" viewBox="0 0 9.5 9.5"><circle cx="4.75" cy="4.75" r="4.2" fill="none" stroke="#6b6f78" stroke-width="0.8"/><path d="M3.5 3.7Q3.5 2.5 4.75 2.5Q6 2.5 6 3.6Q6 4.3 5.2 4.7Q4.75 5 4.75 5.7" fill="none" stroke="#6b6f78" stroke-width="0.75"/><circle cx="4.75" cy="7" r="0.45" fill="#6b6f78"/></svg>
<div class="a" style="left:359px;top:234px;width:560px;height:1px;background:#ebeef5"></div>
<div class="a cb" style="top:248.0px"></div>
<div class="t" style="left:416.5px;top:243.0px;font-size:10px;letter-spacing:0.35px;color:#333">2</div>
<div class="t" style="left:448.8px;top:243.0px;font-size:10px;letter-spacing:0.35px;color:#222"><b>对象点击：</b><span style="color:#3d6ff5">TextView|泰隆银行</span></div>
<svg style="left:808.8px;top:248.0px" width="9" height="9" viewBox="0 0 9 9"><path d="M1.4 6.4L6.2 1.6Q6.8 1 7.4 1.6Q8 2.2 7.4 2.8L2.6 7.6H1.4Z" fill="none" stroke="#3d6ff5" stroke-width="1" stroke-linejoin="round"/><path d="M0.3 8.6H8.2" stroke="#3d6ff5" stroke-width="0.9"/></svg>
<div class="a" style="left:824px;top:247.5px;width:1px;height:10px;background:#e6e8ee"></div>
<svg style="left:831.5px;top:248.0px" width="9" height="9" viewBox="0 0 9 9"><circle cx="4.5" cy="4.5" r="4" fill="none" stroke="#3d6ff5" stroke-width="0.95"/><path d="M3.5 2.8V6.2L6.2 4.5Z" fill="none" stroke="#3d6ff5" stroke-width="0.8" stroke-linejoin="round"/></svg>
<div class="a" style="left:846.6px;top:247.5px;width:1px;height:10px;background:#e6e8ee"></div>
<svg style="left:854px;top:248.0px" width="9" height="9" viewBox="0 0 9 9"><circle cx="4" cy="4" r="3.4" fill="none" stroke="#3d6ff5" stroke-width="1"/><path d="M6.5 6.5L8.6 8.6" stroke="#3d6ff5" stroke-width="1"/></svg>
<div class="a" style="left:870px;top:247.5px;width:1px;height:10px;background:#e6e8ee"></div>
<svg style="left:877.2px;top:248.0px" width="9" height="9" viewBox="0 0 9 9"><path d="M0.4 1.6H8.6M3 1.6V0.5H6V1.6" fill="none" stroke="#f03a3a" stroke-width="1"/><path d="M1.4 2.2H7.6L7.2 8.6H1.8Z" fill="none" stroke="#f03a3a" stroke-width="1.1" stroke-linejoin="round"/><path d="M3.6 3.8V6.8M5.4 3.8V6.8" stroke="#f03a3a" stroke-width="0.9"/></svg>
<div class="a" style="left:893.3px;top:247.5px;width:1px;height:10px;background:#e6e8ee"></div>
<svg style="left:899.8px;top:248.0px" width="9.5" height="9.5" viewBox="0 0 9.5 9.5"><circle cx="4.75" cy="4.75" r="4.2" fill="none" stroke="#6b6f78" stroke-width="0.8"/><path d="M3.5 3.7Q3.5 2.5 4.75 2.5Q6 2.5 6 3.6Q6 4.3 5.2 4.7Q4.75 5 4.75 5.7" fill="none" stroke="#6b6f78" stroke-width="0.75"/><circle cx="4.75" cy="7" r="0.45" fill="#6b6f78"/></svg>
<div class="a" style="left:359px;top:272px;width:560px;height:1px;background:#ebeef5"></div>
<div class="a cb" style="top:292.5px"></div>
<div class="t" style="left:416.5px;top:287.5px;font-size:10px;letter-spacing:0.35px;color:#333">3</div>
<div class="a" style="left:448.4px;top:276.3px;width:246.6px;height:41.3px;background:#e4f5e7;border-radius:3px"></div>
<div class="a" style="left:453px;top:281.2px;font-size:10px;letter-spacing:0.35px;line-height:15.5px;color:#222;font-weight:bold;white-space:nowrap">否<br>则：</div>
<div class="a" style="left:483px;top:281.2px;font-size:10px;letter-spacing:0.35px;line-height:15.5px;color:#222;white-space:nowrap">如果不满足前面IF指定的条件，则执行以下操<br>作</div>
<svg style="left:831.6px;top:292.3px" width="9" height="9" viewBox="0 0 9 9"><path d="M1.4 6.4L6.2 1.6Q6.8 1 7.4 1.6Q8 2.2 7.4 2.8L2.6 7.6H1.4Z" fill="none" stroke="#3d6ff5" stroke-width="1" stroke-linejoin="round"/><path d="M0.3 8.6H8.2" stroke="#3d6ff5" stroke-width="0.9"/></svg>
<div class="a" style="left:846.6px;top:291.8px;width:1px;height:10px;background:#e6e8ee"></div>
<svg style="left:854px;top:292.3px" width="9" height="9" viewBox="0 0 9 9"><path d="M0.4 1.6H8.6M3 1.6V0.5H6V1.6" fill="none" stroke="#f03a3a" stroke-width="1"/><path d="M1.4 2.2H7.6L7.2 8.6H1.8Z" fill="none" stroke="#f03a3a" stroke-width="1.1" stroke-linejoin="round"/><path d="M3.6 3.8V6.8M5.4 3.8V6.8" stroke="#f03a3a" stroke-width="0.9"/></svg>
<div class="a" style="left:870px;top:291.8px;width:1px;height:10px;background:#e6e8ee"></div>
<svg style="left:876.8px;top:292.3px" width="9.5" height="9.5" viewBox="0 0 9.5 9.5"><circle cx="4.75" cy="4.75" r="4.2" fill="none" stroke="#6b6f78" stroke-width="0.8"/><path d="M3.5 3.7Q3.5 2.5 4.75 2.5Q6 2.5 6 3.6Q6 4.3 5.2 4.7Q4.75 5 4.75 5.7" fill="none" stroke="#6b6f78" stroke-width="0.75"/><circle cx="4.75" cy="7" r="0.45" fill="#6b6f78"/></svg>
<div class="a" style="left:359px;top:322.4px;width:560px;height:1px;background:#ebeef5"></div>
<div class="a cb" style="top:336.0px"></div>
<div class="t" style="left:416.5px;top:331.0px;font-size:10px;letter-spacing:0.35px;color:#333">4</div>
<div class="t" style="left:448.8px;top:331.0px;font-size:10px;letter-spacing:0.35px;color:#222"><b>对象点击：</b><span style="color:#3d6ff5">TextView|穗禾禾</span></div>
<svg style="left:808.8px;top:336.0px" width="9" height="9" viewBox="0 0 9 9"><path d="M1.4 6.4L6.2 1.6Q6.8 1 7.4 1.6Q8 2.2 7.4 2.8L2.6 7.6H1.4Z" fill="none" stroke="#3d6ff5" stroke-width="1" stroke-linejoin="round"/><path d="M0.3 8.6H8.2" stroke="#3d6ff5" stroke-width="0.9"/></svg>
<div class="a" style="left:824px;top:335.5px;width:1px;height:10px;background:#e6e8ee"></div>
<svg style="left:831.5px;top:336.0px" width="9" height="9" viewBox="0 0 9 9"><circle cx="4.5" cy="4.5" r="4" fill="none" stroke="#3d6ff5" stroke-width="0.95"/><path d="M3.5 2.8V6.2L6.2 4.5Z" fill="none" stroke="#3d6ff5" stroke-width="0.8" stroke-linejoin="round"/></svg>
<div class="a" style="left:846.6px;top:335.5px;width:1px;height:10px;background:#e6e8ee"></div>
<svg style="left:854px;top:336.0px" width="9" height="9" viewBox="0 0 9 9"><circle cx="4" cy="4" r="3.4" fill="none" stroke="#3d6ff5" stroke-width="1"/><path d="M6.5 6.5L8.6 8.6" stroke="#3d6ff5" stroke-width="1"/></svg>
<div class="a" style="left:870px;top:335.5px;width:1px;height:10px;background:#e6e8ee"></div>
<svg style="left:877.2px;top:336.0px" width="9" height="9" viewBox="0 0 9 9"><path d="M0.4 1.6H8.6M3 1.6V0.5H6V1.6" fill="none" stroke="#f03a3a" stroke-width="1"/><path d="M1.4 2.2H7.6L7.2 8.6H1.8Z" fill="none" stroke="#f03a3a" stroke-width="1.1" stroke-linejoin="round"/><path d="M3.6 3.8V6.8M5.4 3.8V6.8" stroke="#f03a3a" stroke-width="0.9"/></svg>
<div class="a" style="left:893.3px;top:335.5px;width:1px;height:10px;background:#e6e8ee"></div>
<svg style="left:899.8px;top:336.0px" width="9.5" height="9.5" viewBox="0 0 9.5 9.5"><circle cx="4.75" cy="4.75" r="4.2" fill="none" stroke="#6b6f78" stroke-width="0.8"/><path d="M3.5 3.7Q3.5 2.5 4.75 2.5Q6 2.5 6 3.6Q6 4.3 5.2 4.7Q4.75 5 4.75 5.7" fill="none" stroke="#6b6f78" stroke-width="0.75"/><circle cx="4.75" cy="7" r="0.45" fill="#6b6f78"/></svg>
<div class="a" style="left:359px;top:359px;width:560px;height:1px;background:#ebeef5"></div>
<div class="a cb" style="top:373.5px"></div>
<div class="t" style="left:416.5px;top:368.5px;font-size:10px;letter-spacing:0.35px;color:#333">5</div>
<div class="a" style="left:448.3px;top:366.2px;width:144.7px;height:25px;background:#e4f5e7;border-radius:3px"></div>
<div class="t" style="left:452.7px;top:368.5px;font-size:10px;letter-spacing:0.35px;color:#222"><b>判断结束：</b>条件判断结束标记</div>
<svg style="left:842.8px;top:373.2px" width="9" height="9" viewBox="0 0 9 9"><path d="M0.4 1.6H8.6M3 1.6V0.5H6V1.6" fill="none" stroke="#f03a3a" stroke-width="1"/><path d="M1.4 2.2H7.6L7.2 8.6H1.8Z" fill="none" stroke="#f03a3a" stroke-width="1.1" stroke-linejoin="round"/><path d="M3.6 3.8V6.8M5.4 3.8V6.8" stroke="#f03a3a" stroke-width="0.9"/></svg>
<div class="a" style="left:858.2px;top:372.7px;width:1px;height:10px;background:#e6e8ee"></div>
<svg style="left:865.4px;top:373.2px" width="9.5" height="9.5" viewBox="0 0 9.5 9.5"><circle cx="4.75" cy="4.75" r="4.2" fill="none" stroke="#6b6f78" stroke-width="0.8"/><path d="M3.5 3.7Q3.5 2.5 4.75 2.5Q6 2.5 6 3.6Q6 4.3 5.2 4.7Q4.75 5 4.75 5.7" fill="none" stroke="#6b6f78" stroke-width="0.75"/><circle cx="4.75" cy="7" r="0.45" fill="#6b6f78"/></svg>
<div class="a" style="left:359px;top:397px;width:560px;height:1px;background:#ebeef5"></div>
<div class="a cb" style="top:410.5px"></div>
<div class="t" style="left:416.5px;top:405.5px;font-size:10px;letter-spacing:0.35px;color:#333">6</div>
<div class="t" style="left:448.8px;top:405.5px;font-size:10px;letter-spacing:0.35px;color:#222"><b>对象点击：</b><span style="color:#3d6ff5">ImageView|white</span></div>
<svg style="left:808.8px;top:410.5px" width="9" height="9" viewBox="0 0 9 9"><path d="M1.4 6.4L6.2 1.6Q6.8 1 7.4 1.6Q8 2.2 7.4 2.8L2.6 7.6H1.4Z" fill="none" stroke="#3d6ff5" stroke-width="1" stroke-linejoin="round"/><path d="M0.3 8.6H8.2" stroke="#3d6ff5" stroke-width="0.9"/></svg>
<div class="a" style="left:824px;top:410.0px;width:1px;height:10px;background:#e6e8ee"></div>
<svg style="left:831.5px;top:410.5px" width="9" height="9" viewBox="0 0 9 9"><circle cx="4.5" cy="4.5" r="4" fill="none" stroke="#3d6ff5" stroke-width="0.95"/><path d="M3.5 2.8V6.2L6.2 4.5Z" fill="none" stroke="#3d6ff5" stroke-width="0.8" stroke-linejoin="round"/></svg>
<div class="a" style="left:846.6px;top:410.0px;width:1px;height:10px;background:#e6e8ee"></div>
<svg style="left:854px;top:410.5px" width="9" height="9" viewBox="0 0 9 9"><circle cx="4" cy="4" r="3.4" fill="none" stroke="#3d6ff5" stroke-width="1"/><path d="M6.5 6.5L8.6 8.6" stroke="#3d6ff5" stroke-width="1"/></svg>
<div class="a" style="left:870px;top:410.0px;width:1px;height:10px;background:#e6e8ee"></div>
<svg style="left:877.2px;top:410.5px" width="9" height="9" viewBox="0 0 9 9"><path d="M0.4 1.6H8.6M3 1.6V0.5H6V1.6" fill="none" stroke="#f03a3a" stroke-width="1"/><path d="M1.4 2.2H7.6L7.2 8.6H1.8Z" fill="none" stroke="#f03a3a" stroke-width="1.1" stroke-linejoin="round"/><path d="M3.6 3.8V6.8M5.4 3.8V6.8" stroke="#f03a3a" stroke-width="0.9"/></svg>
<div class="a" style="left:893.3px;top:410.0px;width:1px;height:10px;background:#e6e8ee"></div>
<svg style="left:899.8px;top:410.5px" width="9.5" height="9.5" viewBox="0 0 9.5 9.5"><circle cx="4.75" cy="4.75" r="4.2" fill="none" stroke="#6b6f78" stroke-width="0.8"/><path d="M3.5 3.7Q3.5 2.5 4.75 2.5Q6 2.5 6 3.6Q6 4.3 5.2 4.7Q4.75 5 4.75 5.7" fill="none" stroke="#6b6f78" stroke-width="0.75"/><circle cx="4.75" cy="7" r="0.45" fill="#6b6f78"/></svg>
<div class="a" style="left:359px;top:434px;width:560px;height:1px;background:#ebeef5"></div>

<!-- RIGHT PANEL -->
<div class="a" style="left:955px;top:81.5px;width:302px;height:597.5px;background:#f5f6f9;border-radius:4px"></div>
<svg style="left:976px;top:127px" width="261" height="506" viewBox="0 0 261 506"><rect x="0.8" y="1" width="259.4" height="504.5" rx="5" fill="#f4f7fd" stroke="#1659ff" stroke-width="1.35" stroke-dasharray="4.2 2.3"/></svg>
<svg style="left:1097px;top:349.5px" width="18.5" height="27" viewBox="0 0 18.5 27"><defs><linearGradient id="pg" x1="0" y1="0" x2="0.6" y2="1"><stop offset="0" stop-color="#1a78ff"/><stop offset="1" stop-color="#17c3ff"/></linearGradient></defs><rect x="0" y="0" width="18.5" height="27" rx="3" fill="url(#pg)"/><rect x="6" y="2.3" width="6.5" height="1.2" rx="0.6" fill="#fff"/><circle cx="9.25" cy="22.5" r="1.1" fill="#fff"/></svg>
<div class="t" style="left:1075px;top:381px;font-size:10px;letter-spacing:0.35px;color:#3e6ff2">点击启用手机</div>
<div class="t" style="left:1034px;top:397.5px;font-size:10px;letter-spacing:0.35px;color:#8c9099">通过web端操作手机以生成脚本</div>

<!-- BOTTOM BAR -->
<div class="a" style="left:165px;top:684px;width:1103px;height:1px;background:#dcdcdc"></div>
<svg style="left:175.5px;top:696px" width="11" height="8" viewBox="0 0 11 8"><path d="M0.8 0.2V7" stroke="#6b7282" stroke-width="1"/><path d="M10.5 3.6H3M6.1 0.7L3 3.6L6.1 6.5" fill="none" stroke="#6b7282" stroke-width="1"/></svg>
<svg style="left:202px;top:693px" width="9" height="13" viewBox="0 0 9 13"><path d="M2.2 1.3H6.8L6.3 1.9L7.9 7.2L5.5 7.9L4.5 11.6L3.5 7.9L1.1 7.2L2.7 1.9Z" fill="none" stroke="#6b7282" stroke-width="1" stroke-linejoin="round"/><path d="M3.5 1.4L3.9 4M5.5 1.4L5.1 4" stroke="#6b7282" stroke-width="0.7"/></svg>

</body></html>
